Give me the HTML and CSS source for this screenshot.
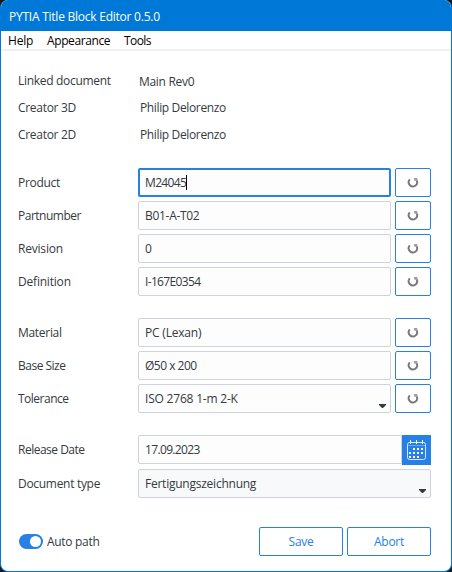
FILE: index.html
```html
<!DOCTYPE html>
<html lang="en">
<head>
<meta charset="utf-8">
<title>PYTIA Title Block Editor 0.5.0</title>
<link rel="stylesheet" href="styles.css">
</head>
<body>
<svg class="sprite" width="0" height="0" aria-hidden="true">
  <symbol id="reset" viewBox="0 0 12 12">
    <path d="M2.8 2.4A4.2 4.2 0 1 0 9.6 3.2" fill="none" stroke="#74787d" stroke-width="1.9"/>
    <path d="M7 1H10.3V4.6L8.9 3.5 7.8 4.1 7.2 3Z" fill="#9a9da1"/>
  </symbol>
</svg>
<main class="window">
  <header class="titlebar"><span>PYTIA Title Block Editor 0.5.0</span></header>
  <nav class="menu"><span class="help">Help</span><span class="appearance">Appearance</span><span class="tools">Tools</span></nav>
  <div class="content">
    <section class="info">
      <div class="row"><span class="label">Linked document</span><span class="main-doc">Main Rev0</span></div>
      <div class="row"><span class="label">Creator 3D</span><span class="person">Philip Delorenzo</span></div>
      <div class="row"><span class="label">Creator 2D</span><span class="person">Philip Delorenzo</span></div>
    </section>
    <section class="group">
      <div class="row"><span class="label">Product</span><div class="field focused"><span class="numeric">M24045</span><i class="caret"></i></div><button class="reset"><svg><use href="#reset"/></svg></button></div>
      <div class="row"><span class="label tight">Partnumber</span><div class="field"><span>B01-A-T02</span></div><button class="reset"><svg><use href="#reset"/></svg></button></div>
      <div class="row"><span class="label loose">Revision</span><div class="field"><span>0</span></div><button class="reset"><svg><use href="#reset"/></svg></button></div>
      <div class="row"><span class="label loose">Definition</span><div class="field"><span class="numeric">I-167E0354</span></div><button class="reset"><svg><use href="#reset"/></svg></button></div>
    </section>
    <section class="group">
      <div class="row"><span class="label">Material</span><div class="field"><span class="loose">PC (Lexan)</span></div><button class="reset"><svg><use href="#reset"/></svg></button></div>
      <div class="row"><span class="label tight">Base Size</span><div class="field"><span class="tight">Ø50 x 200</span></div><button class="reset"><svg><use href="#reset"/></svg></button></div>
      <div class="row"><span class="label tight">Tolerance</span><div class="field combo"><span class="loose">ISO 2768 1-m 2-K</span><svg class="arrow" viewBox="0 0 7 4"><path d="M0 0H7V1L4 4H3L0 1Z"/></svg></div><button class="reset"><svg><use href="#reset"/></svg></button></div>
    </section>
    <section class="group details">
      <div class="row date"><span class="label tight">Release Date</span><div class="field"><span class="numeric">17.09.2023</span></div><button class="calendar">
        <svg viewBox="0 0 29 30" fill="none" stroke="#d8e8fc">
          <rect x="5.5" y="7.5" width="18" height="17" rx="2"/>
          <path d="M6 10.5H23" stroke="#69a9ef"/>
          <path d="M8.5 5V9M14.5 5V9M20.5 5V9" stroke="#fff"/>
          <path d="M11 14H22M7 18H22M7 22H18" stroke="#fff" stroke-width="2" stroke-dasharray="2 2"/>
        </svg></button></div>
      <div class="row"><span class="label">Document type</span><div class="field combo wide"><span class="doctype">Fertigungszeichnung</span><svg class="arrow" viewBox="0 0 7 4"><path d="M0 0H7V1L4 4H3L0 1Z"/></svg></div></div>
    </section>
    <footer class="actions">
      <div class="toggle"><i></i></div><span class="auto">Auto path</span>
      <button class="action">Save</button><button class="action">Abort</button>
    </footer>
  </div>
</main>
</body>
</html>
```
FILE: styles.css
```css
* { box-sizing: border-box; }
html { background: #17191c; }
body { margin: 0; font: 12px/16px "Open Sans", "Noto Sans", sans-serif; color: #343a40; letter-spacing: -.3px; }
button { margin: 0; padding: 0; font: inherit; letter-spacing: inherit; }
.sprite { display: none; }
.window { display: flex; flex-direction: column; width: 452px; height: 572px; border: 1px solid #0078d4; border-top: 0; border-radius: 8px; overflow: hidden; background: #fff; white-space: nowrap; }
.titlebar { height: 31px; padding: 9px 8px 0; background: #0078d7; color: #fff; letter-spacing: -.24px; }
.menu { display: flex; height: 20px; padding: 2px 7px 0; border-bottom: 2px solid #f0f0f0; color: #000; letter-spacing: 0; }
.help { width: 39px; letter-spacing: -.2px; }
.appearance { width: 77px; letter-spacing: -.4px; }
.tools { letter-spacing: -.6px; }
.content { padding: 17px 20px 0 17px; }
.row { display: flex; align-items: center; }
.label { flex: 0 0 120px; }
.tight { letter-spacing: -.5px; }
.loose { letter-spacing: -.2px; }
.numeric { letter-spacing: -.65px; }
.doctype { letter-spacing: -.24px; }
.info .row { height: 27px; padding-bottom: 1px; }
.main-doc { padding: 2px 0 0 1px; }
.person { padding-left: 2px; letter-spacing: -.36px; }
.group { display: grid; row-gap: 4px; margin-top: 19px; }
.group + .group { margin-top: 22px; }
.group .row { height: 29px; }
.field { display: flex; align-items: center; width: 253px; height: 29px; padding: 0 6px; border: 1px solid #ced4da; border-radius: 2px; background: #fdfdfd; }
.focused { padding: 0 5px; border: 2px solid #2780e3; }
.caret { width: 1px; height: 15px; background: #000; }
.reset { display: flex; align-items: center; justify-content: center; width: 36px; height: 29px; margin-left: 4px; border: 1px solid #2780e3; border-radius: 2px; background: #fff; }
.reset svg { width: 12px; height: 12px; }
.combo { justify-content: space-between; padding-right: 4px; }
.arrow { align-self: flex-end; width: 7px; height: 4px; margin-bottom: 4px; fill: #343a40; }
.wide { width: 293px; background: #f8f9fa; }
.details { row-gap: 5px; }
.date .field { width: 264px; border-radius: 2px 0 0 2px; }
.calendar { width: 29px; height: 30px; margin-bottom: -1px; border: 0; background: #2780e3; }
.calendar svg { display: block; width: 29px; height: 30px; }
.actions { display: flex; align-items: center; height: 29px; margin-top: 29px; }
.toggle { display: flex; align-items: center; justify-content: flex-end; width: 24px; height: 15px; margin-left: 1px; padding-right: 2px; border-radius: 8px; background: #2780e3; }
.toggle i { width: 11px; height: 11px; border-radius: 50%; background: #fff; }
.auto { flex: 1; margin-left: 4px; }
.action { width: 84px; height: 29px; border: 1px solid #2780e3; border-radius: 2px; background: #fff; color: #2780e3; }
.action + .action { margin-left: 4px; }
```
